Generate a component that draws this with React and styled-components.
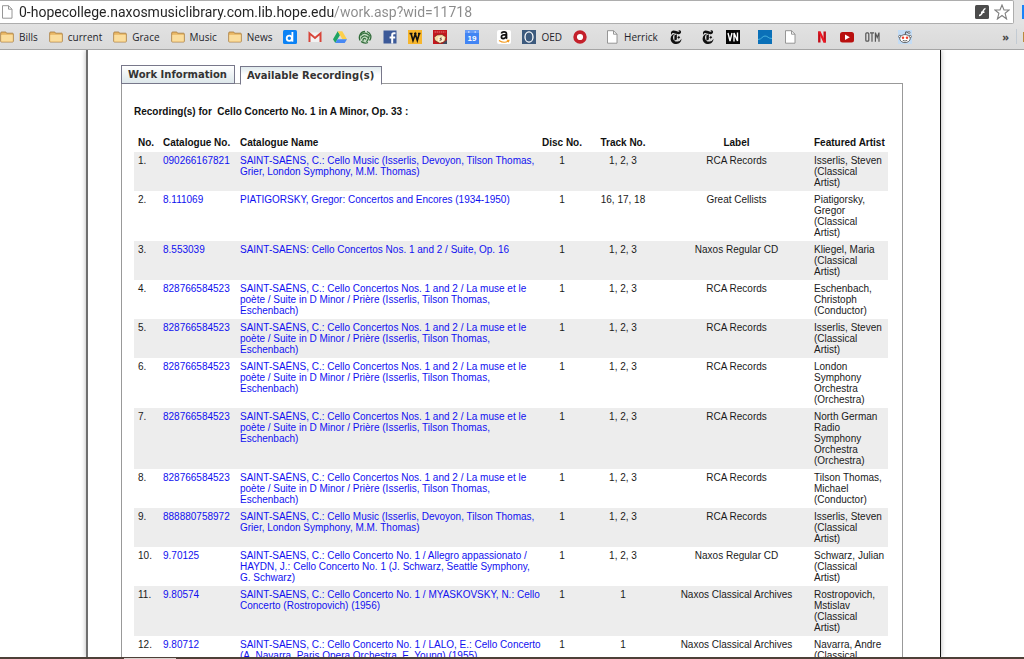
import React from 'react';
import styled, { createGlobalStyle } from 'styled-components';
import { SiNewyorktimes } from 'react-icons/si';

const GlobalStyle = createGlobalStyle`
  * {
    box-sizing: border-box;
  }

  body {
    margin: 0;
    background: #fff;
    font-family: 'Liberation Sans', Arial, sans-serif;
  }
`;

const Screen = styled.div`
  display: flex;
  flex-direction: column;
  height: 100vh;
  overflow: hidden;
`;

/* Browser bars */
const AddressRow = styled.div`
  display: flex;
  align-items: center;
  height: 24px;
  background: #e3e3e3;
`;

const AddressBar = styled.label`
  flex: 1;
  display: flex;
  align-items: center;
  gap: 5px;
  height: 24px;
  padding: 0 3px 0 0;
  background: #fff;
  border: 1px solid #adadad;
  border-left: 0;
  border-radius: 0 2px 2px 0;
`;

const AddressInput = styled.input`
  flex: 1;
  min-width: 0;
  height: 20px;
  padding: 0;
  border: 0;
  outline: 0;
  font-family: Roboto, 'Segoe UI', sans-serif;
  font-size: 14px;
  color: #222;
  /* host part dark, path part grey */
  background: linear-gradient(to right, #222 315px, #8a8a8a 315px);
  background-clip: text;
  -webkit-text-fill-color: transparent;
`;

const IconButton = styled.button`
  display: flex;
  padding: 0;
  border: 0;
  background: none;
`;

const AddressEnd = styled.div`
  width: 10px;
  height: 14px;
  border-right: 2px solid #1a83f9;
`;

const BookmarkBar = styled.nav`
  display: flex;
  align-items: center;
  height: 26px;
  flex-shrink: 0;
  background: linear-gradient(#e2e2e2, #dadada);
  border-bottom: 1px solid #a5a5a5;
`;

const Bookmark = styled.a`
  display: flex;
  align-items: center;
  flex-shrink: 0;
  gap: 5px;
  margin-left: ${({ $wide }) => ($wide ? 18 : 11)}px;
  font-family: 'Open Sans', 'Segoe UI', sans-serif;
  font-size: 10px;
  line-height: 14px;
  color: #1f1f2b;
  text-decoration: none;

  &:first-child {
    margin-left: 0;
  }
`;

const MoreButton = styled.button`
  margin-left: auto;
  padding: 0 7px 0 0;
  border: 0;
  border-right: 1px solid #c3cbd3;
  background: none;
  font-family: 'Open Sans', sans-serif;
  font-size: 11px;
  font-weight: 700;
  color: #444;
`;

const BarEnd = styled.div`
  width: 7px;
  height: 10px;
  border-right: 1px solid #b98a3c;
`;

/* Library page */
const Viewport = styled.div`
  flex: 1;
  min-height: 0;
  overflow: hidden;
  display: flex;
  justify-content: center;
  padding-left: 3px;
`;

const Page = styled.main`
  width: 855px;
  padding: 15px 37px 0 33px;
  border-left: 2px solid #6e6e6e;
  border-right: 1px solid #111;
  box-shadow: 0 0 5px rgba(0, 0, 0, 0.3);
`;

const Tabs = styled.div`
  display: flex;
  align-items: flex-start;
  gap: 5px;
  height: 18px;
`;

const Tab = styled.button`
  position: relative;
  height: 19px;
  margin-top: ${({ $active }) => ($active ? 1 : 0)}px;
  padding: 0 7px 0 6px;
  border: 1px solid #77778a;
  border-bottom-color: ${({ $active }) => ($active ? '#fff' : '#77778a')};
  background: ${({ $active }) =>
    $active ? 'linear-gradient(#dfe9ec, #fff 8px)' : 'linear-gradient(#fff, #dde7ea)'};
  font-family: 'DejaVu Sans', Verdana, sans-serif;
  font-size: 10px;
  font-weight: 700;
  line-height: 17px;
  color: #333;
`;

const Panel = styled.section`
  padding: 22px 14px 0 12px;
  border: 1px solid #999;
`;

const Heading = styled.h1`
  margin: 0 0 18px;
  font-size: 10px;
  line-height: 12px;
  white-space: pre;
  color: #111;
`;

const RecordingTable = styled.table`
  width: 100%;
  table-layout: fixed;
  border-collapse: collapse;
  font-size: 10px;
  line-height: 11px;
  color: #1a1a1a;
`;

const Col = styled.col`
  width: ${({ $width }) => ($width ? `${$width}px` : 'auto')};
`;

const HeaderCell = styled.th`
  padding: 1px 0 4px;
  padding-left: ${({ $center }) => ($center ? 0 : 4)}px;
  text-align: ${({ $center }) => ($center ? 'center' : 'left')};
  white-space: nowrap;
  color: #111;
`;

const Row = styled.tr`
  &:nth-child(odd) {
    background: #ededed;
  }
`;

const Cell = styled.td`
  padding: 3px 0;
  padding-left: ${({ $center }) => ($center ? 0 : 4)}px;
  vertical-align: top;
  text-align: ${({ $center }) => ($center ? 'center' : 'left')};
`;

/* titles carry their own line breaks */
const NameCell = styled(Cell)`
  white-space: pre;
`;

const ArtistCell = styled(Cell)`
  padding-right: 3px;
`;

const CellLink = styled.a`
  color: #1010f0;
  text-decoration: none;
`;

const Taskbar = styled.footer`
  height: 2px;
  flex-shrink: 0;
  background: linear-gradient(#d8d3cf, #d8d3cf) 124px 1px / 52px 1px no-repeat #4d4038;
`;

const FolderIcon = () => (
  <svg width="14" height="14" viewBox="0 0 14 14">
    <path d="M.7 3Q.7 2 1.700 2h3.600q1 0 1.200 1.200h6q.8 0 .8.800v7.200q0 .8-.8.800H1.500q-.8 0-.8-.8z" fill="#e9b765" stroke="#a67a3a" strokeWidth=".8" />
    <path d="M1.200 4.800h11.600v6.800H1.200z" fill="#fbdd9c" />
  </svg>
);

const PageIcon = () => (
  <svg width="14" height="14" viewBox="0 0 14 14">
    <path d="M2.500 .7h6l3.500 3.500v9H2.500z" fill="#fff" stroke="#8b8b8b" strokeWidth=".9" />
    <path d="M8.500 .7v3.500H12" fill="none" stroke="#8b8b8b" strokeWidth=".9" />
  </svg>
);

const DiigoIcon = () => (
  <svg width="14" height="14" viewBox="0 0 14 14">
    <rect width="14" height="14" rx="1.500" fill="#0b82f5" />
    <circle cx="6.300" cy="8.200" r="2.600" fill="none" stroke="#fff" strokeWidth="1.800" />
    <path d="M9.400 2v9.700" stroke="#fff" strokeWidth="1.800" />
  </svg>
);

const GmailIcon = () => (
  <svg width="14" height="14" viewBox="0 0 14 14">
    <path d="M1 2.500h12v9.500H1z" fill="#f2f2f2" />
    <path d="M1.500 12V3.300L7 8l5.500-4.700V12" fill="none" stroke="#d8453a" strokeWidth="2" />
  </svg>
);

const DriveIcon = () => (
  <svg width="14" height="14" viewBox="0 0 14 14">
    <path d="M4.700 1.200 0 9.200l2.300 3.800L7 5z" fill="#1fa463" />
    <path d="M4.700 1.200h4.600L14 9.200H9.400z" fill="#fdd04b" />
    <path d="M4.600 9.200H14L11.700 13H2.300z" fill="#4688f4" />
  </svg>
);

const GlobeIcon = () => (
  <svg width="14" height="14" viewBox="0 0 14 14">
    <circle cx="7" cy="7" r="5.500" fill="#c4dcc2" />
    <path d="M2 10.500C0 6 3 1.500 7 1.500M9 1.500c4 1.500 5 6 2.500 9M10 12.500c-2.500 1-5 .5-7-1" fill="none" stroke="#2f6b38" strokeWidth="1.300" />
    <path d="M2.500 5.500c2.500-3 5.500-3 8.500-.5M3 8.500c1.500-3 4.500-3.500 7-1M5 11.500c-.5-3 1.500-4 3-2M11.500 5c-1 3-1 4.500-3 7" fill="none" stroke="#35703e" strokeWidth="1.200" />
  </svg>
);

const FacebookIcon = () => (
  <svg width="14" height="14" viewBox="0 0 14 14">
    <rect x=".5" y=".5" width="13" height="13" fill="#3b5998" />
    <path d="M9.200 13.500V5q0-1.800 1.600-1.800h1.700M6.600 7.600h5.600" fill="none" stroke="#fff" strokeWidth="2" />
  </svg>
);

const WordIcon = () => (
  <svg width="14" height="14" viewBox="0 0 14 14">
    <rect width="14" height="14" fill="#f7b62c" />
    <path d="M1.500 3.500h3M6 3.500h2.500M10 3.500h2.500M3 3.500l2 7 2.300-6.500 2 6.500 2-7" fill="none" stroke="#111" strokeWidth="1.600" />
  </svg>
);

const TilesIcon = () => (
  <svg width="14" height="14" viewBox="0 0 14 14">
    <rect width="14" height="14" fill="#c3171d" />
    <path d="M1.500 2h11" stroke="#e07a7c" strokeWidth="1" strokeDasharray="1.500 .6" />
    <path d="M1 7.500L4 5l5-.5 4 2.500-1 4-5 2.500-5-3z" fill="#f6dca6" stroke="#5c1b10" strokeWidth=".6" />
    <path d="M5.500 6.500l5.500.8-.8 4.700-5.500-.8z" fill="#fff3d6" />
    <path d="M8.800 8L7 8.300l1.500 1.600-1.900.4" fill="none" stroke="#3b1b10" strokeWidth=".8" />
    <path d="M9 14h5v-4z" fill="#3f4a5c" />
  </svg>
);

const CalendarIcon = () => (
  <svg width="14" height="14" viewBox="0 0 14 14">
    <rect width="14" height="14" fill="#4285f4" />
    <path d="M0 0h14v3H0z" fill="#699df6" />
    <path d="M3 2h1.500M9.500 2H11" stroke="#fff" strokeWidth="1" />
    <text x="7" y="11" fontFamily="Liberation Sans" fontSize="8" fontWeight="700" fill="#fff" textAnchor="middle">19</text>
  </svg>
);

const AmazonIcon = () => (
  <svg width="14" height="14" viewBox="0 0 14 14">
    <rect width="14" height="14" rx="2" fill="#fff" />
    <path d="M4.300 3.600q.5-1.700 2.700-1.700 2.500 0 2.500 2.200v3.200q0 .8.600 1.400M9.400 4.700q-5 0-5 2.300 0 1.600 1.700 1.600 2.300 0 3.300-2.600" fill="none" stroke="#111" strokeWidth="1.700" />
    <path d="M2 10.500q5 3.300 9.300.5M9.800 10.200h2.200l-.7 2" fill="none" stroke="#f39a1e" strokeWidth="1.100" />
  </svg>
);

const OxfordIcon = () => (
  <svg width="14" height="14" viewBox="0 0 14 14">
    <rect width="14" height="14" fill="#3c5a7d" />
    <ellipse cx="7" cy="7" rx="4" ry="5.200" fill="none" stroke="#fff" strokeWidth="1.300" />
  </svg>
);

const RingIcon = () => (
  <svg width="14" height="14" viewBox="0 0 14 14">
    <circle cx="7" cy="7" r="4.900" fill="#fff" stroke="#c4202b" strokeWidth="3.600" />
  </svg>
);

const VnIcon = () => (
  <svg width="14" height="14" viewBox="0 0 14 14">
    <rect width="14" height="14" fill="#050505" />
    <path d="M2 3l2 8 2-8M8 11.500V3l3.500 8V2.500" fill="none" stroke="#fff" strokeWidth="1.400" />
  </svg>
);

const WaveIcon = () => (
  <svg width="14" height="14" viewBox="0 0 14 14">
    <rect width="14" height="14" fill="#0a70b8" />
    <path d="M0 9.500c4 0 4-3.500 7-3.500s3 2.500 7 2.500" fill="none" stroke="#47b3df" strokeWidth="1" />
  </svg>
);

const NetflixIcon = () => (
  <svg width="14" height="14" viewBox="0 0 14 14">
    <path d="M4.300 12.500v-11M9.700 12.500v-11" stroke="#c30d18" strokeWidth="2.400" />
    <path d="M3.100 1.500h2.500l5.300 11H8.400z" fill="#ee1622" />
  </svg>
);

const YoutubeIcon = () => (
  <svg width="14" height="14" viewBox="0 0 14 14">
    <rect y="2" width="14" height="10.500" rx="2.500" fill="#b9100f" />
    <path d="M5 4.500v5.500l4.800-2.700z" fill="#fff" />
  </svg>
);

const OtmIcon = () => (
  <svg width="15" height="14" viewBox="0 0 15 14">
    <rect x=".8" y="2.800" width="3" height="8.400" rx="1" fill="none" stroke="#555" strokeWidth="1.200" />
    <path d="M5 2.800h4M7 2.800v9M10.400 11.800V2.600l1.800 5 1.800-5v9.200" fill="none" stroke="#555" strokeWidth="1.200" />
  </svg>
);

const RedditIcon = () => (
  <svg width="14" height="14" viewBox="0 0 14 14">
    <rect width="14" height="14" fill="#c3dcf5" />
    <path d="M7 5l.8-3.200 2.700.6" fill="none" stroke="#333" strokeWidth=".8" />
    <circle cx="11" cy="2.500" r="1" fill="#fff" stroke="#333" strokeWidth=".6" />
    <circle cx="1.900" cy="6.600" r="1.300" fill="#fff" stroke="#333" strokeWidth=".6" />
    <circle cx="12.100" cy="6.600" r="1.300" fill="#fff" stroke="#333" strokeWidth=".6" />
    <ellipse cx="7" cy="8.600" rx="5.200" ry="4" fill="#fff" stroke="#333" strokeWidth=".7" />
    <circle cx="5" cy="7.700" r="1.200" fill="#f0402a" />
    <circle cx="9" cy="7.700" r="1.200" fill="#f0402a" />
    <path d="M4.800 10.300q2.200 1.400 4.400 0" fill="none" stroke="#333" strokeWidth=".7" />
  </svg>
);

const FlashIcon = () => (
  <svg width="14" height="14" viewBox="0 0 14 14">
    <rect width="14" height="14" rx="1.500" fill="#4c4c4c" />
    <path d="M10.500 3.500c-3 0-2.500 7-6.500 7M6 7.200h3.500" fill="none" stroke="#fff" strokeWidth="1.400" />
  </svg>
);

const StarIcon = () => (
  <svg width="16" height="16" viewBox="0 0 16 16">
    <path d="M8 1l2 5h5.200l-4.100 3.300L12.600 15 8 11.500 3.400 15l1.500-5.700L.8 6H6z" fill="#fff" stroke="#808080" strokeWidth="1.100" />
  </svg>
);

const TimesIcon = () => <SiNewyorktimes size={14} color="#111" />;

const bookmarks = [
  { icon: FolderIcon, label: 'Bills' },
  { icon: FolderIcon, label: 'current' },
  { icon: FolderIcon, label: 'Grace' },
  { icon: FolderIcon, label: 'Music' },
  { icon: FolderIcon, label: 'News' },
  { icon: DiigoIcon, title: 'Diigo' },
  { icon: GmailIcon, title: 'Gmail' },
  { icon: DriveIcon, title: 'Drive' },
  { icon: GlobeIcon, title: 'Globe' },
  { icon: FacebookIcon, title: 'Facebook' },
  { icon: WordIcon, title: 'Words' },
  { icon: TilesIcon, title: 'Tiles' },
  { icon: CalendarIcon, title: 'Calendar', wide: true },
  { icon: AmazonIcon, title: 'Amazon', wide: true },
  { icon: OxfordIcon, label: 'OED' },
  { icon: RingIcon, title: 'Ring' },
  { icon: PageIcon, label: 'Herrick', wide: true },
  { icon: TimesIcon, title: 'Times' },
  { icon: TimesIcon, title: 'Times', wide: true },
  { icon: VnIcon, title: 'VN' },
  { icon: WaveIcon, title: 'Wave', wide: true },
  { icon: PageIcon, title: 'Page' },
  { icon: NetflixIcon, title: 'Netflix', wide: true },
  { icon: YoutubeIcon, title: 'YouTube' },
  { icon: OtmIcon, title: 'OTM' },
  { icon: RedditIcon, title: 'Reddit', wide: true },
];

const MUSE = 'SAINT-SAËNS, C.: Cello Concertos Nos. 1 and 2 / La muse et le\npoète / Suite in D Minor / Prière (Isserlis, Tilson Thomas,\nEschenbach)';
const CELLO_MUSIC = 'SAINT-SAËNS, C.: Cello Music (Isserlis, Devoyon, Tilson Thomas,\nGrier, London Symphony, M.M. Thomas)';

const recordings = [
  { catalogue: '090266167821', name: CELLO_MUSIC, tracks: '1, 2, 3', label: 'RCA Records', artist: 'Isserlis, Steven (Classical Artist)' },
  { catalogue: '8.111069', name: 'PIATIGORSKY, Gregor: Concertos and Encores (1934-1950)', tracks: '16, 17, 18', label: 'Great Cellists', artist: 'Piatigorsky, Gregor (Classical Artist)' },
  { catalogue: '8.553039', name: 'SAINT-SAENS: Cello Concertos Nos. 1 and 2 / Suite, Op. 16', tracks: '1, 2, 3', label: 'Naxos Regular CD', artist: 'Kliegel, Maria (Classical Artist)' },
  { catalogue: '828766584523', name: MUSE, tracks: '1, 2, 3', label: 'RCA Records', artist: 'Eschenbach, Christoph (Conductor)' },
  { catalogue: '828766584523', name: MUSE, tracks: '1, 2, 3', label: 'RCA Records', artist: 'Isserlis, Steven (Classical Artist)' },
  { catalogue: '828766584523', name: MUSE, tracks: '1, 2, 3', label: 'RCA Records', artist: 'London Symphony Orchestra (Orchestra)' },
  { catalogue: '828766584523', name: MUSE, tracks: '1, 2, 3', label: 'RCA Records', artist: 'North German Radio Symphony Orchestra (Orchestra)' },
  { catalogue: '828766584523', name: MUSE, tracks: '1, 2, 3', label: 'RCA Records', artist: 'Tilson Thomas, Michael (Conductor)' },
  { catalogue: '888880758972', name: CELLO_MUSIC, tracks: '1, 2, 3', label: 'RCA Records', artist: 'Isserlis, Steven (Classical Artist)' },
  { catalogue: '9.70125', name: 'SAINT-SAENS, C.: Cello Concerto No. 1 / Allegro appassionato /\nHAYDN, J.: Cello Concerto No. 1 (J. Schwarz, Seattle Symphony,\nG. Schwarz)', tracks: '1, 2, 3', label: 'Naxos Regular CD', artist: 'Schwarz, Julian (Classical Artist)' },
  { catalogue: '9.80574', name: 'SAINT-SAENS, C.: Cello Concerto No. 1 / MYASKOVSKY, N.: Cello\nConcerto (Rostropovich) (1956)', tracks: '1', label: 'Naxos Classical Archives', artist: 'Rostropovich, Mstislav (Classical Artist)' },
  { catalogue: '9.80712', name: 'SAINT-SAENS, C.: Cello Concerto No. 1 / LALO, E.: Cello Concerto\n(A. Navarra, Paris Opera Orchestra, E. Young) (1955)', tracks: '1', label: 'Naxos Classical Archives', artist: 'Navarra, Andre (Classical Artist)' },
];

const App = () => {
  return (
    <Screen>
      <GlobalStyle />
      <AddressRow>
        <AddressBar>
          <PageIcon />
          <AddressInput
            type="text"
            aria-label="Address"
            defaultValue="0-hopecollege.naxosmusiclibrary.com.lib.hope.edu/work.asp?wid=11718"
          />
          <IconButton type="button" aria-label="Plugin"><FlashIcon /></IconButton>
          <IconButton type="button" aria-label="Bookmark this page"><StarIcon /></IconButton>
        </AddressBar>
        <AddressEnd />
      </AddressRow>

      <BookmarkBar>
        {bookmarks.map(({ icon: Icon, label, title, wide }, i) => (
          <Bookmark key={i} href="#" $wide={wide} aria-label={label || title}>
            <Icon />
            {label}
          </Bookmark>
        ))}
        <MoreButton type="button">»</MoreButton>
        <BarEnd />
      </BookmarkBar>

      <Viewport>
        <Page>
          <Tabs>
            <Tab type="button">Work Information</Tab>
            <Tab type="button" $active>Available Recording(s)</Tab>
          </Tabs>
          <Panel>
            <Heading>Recording(s) for  Cello Concerto No. 1 in A Minor, Op. 33 :</Heading>
            <RecordingTable>
              <colgroup>
                <Col $width={25} />
                <Col $width={77} />
                <Col />
                <Col $width={42} />
                <Col $width={80} />
                <Col $width={147} />
                <Col $width={78} />
              </colgroup>
              <thead>
                <tr>
                  <HeaderCell>No.</HeaderCell>
                  <HeaderCell>Catalogue No.</HeaderCell>
                  <HeaderCell>Catalogue Name</HeaderCell>
                  <HeaderCell $center>Disc No.</HeaderCell>
                  <HeaderCell $center>Track No.</HeaderCell>
                  <HeaderCell $center>Label</HeaderCell>
                  <HeaderCell>Featured Artist</HeaderCell>
                </tr>
              </thead>
              <tbody>
                {recordings.map((rec, i) => (
                  <Row key={i}>
                    <Cell>{i + 1}.</Cell>
                    <Cell><CellLink href="#">{rec.catalogue}</CellLink></Cell>
                    <NameCell><CellLink href="#">{rec.name}</CellLink></NameCell>
                    <Cell $center>1</Cell>
                    <Cell $center>{rec.tracks}</Cell>
                    <Cell $center>{rec.label}</Cell>
                    <ArtistCell>{rec.artist}</ArtistCell>
                  </Row>
                ))}
              </tbody>
            </RecordingTable>
          </Panel>
        </Page>
      </Viewport>
      <Taskbar />
    </Screen>
  );
};

export default App;
